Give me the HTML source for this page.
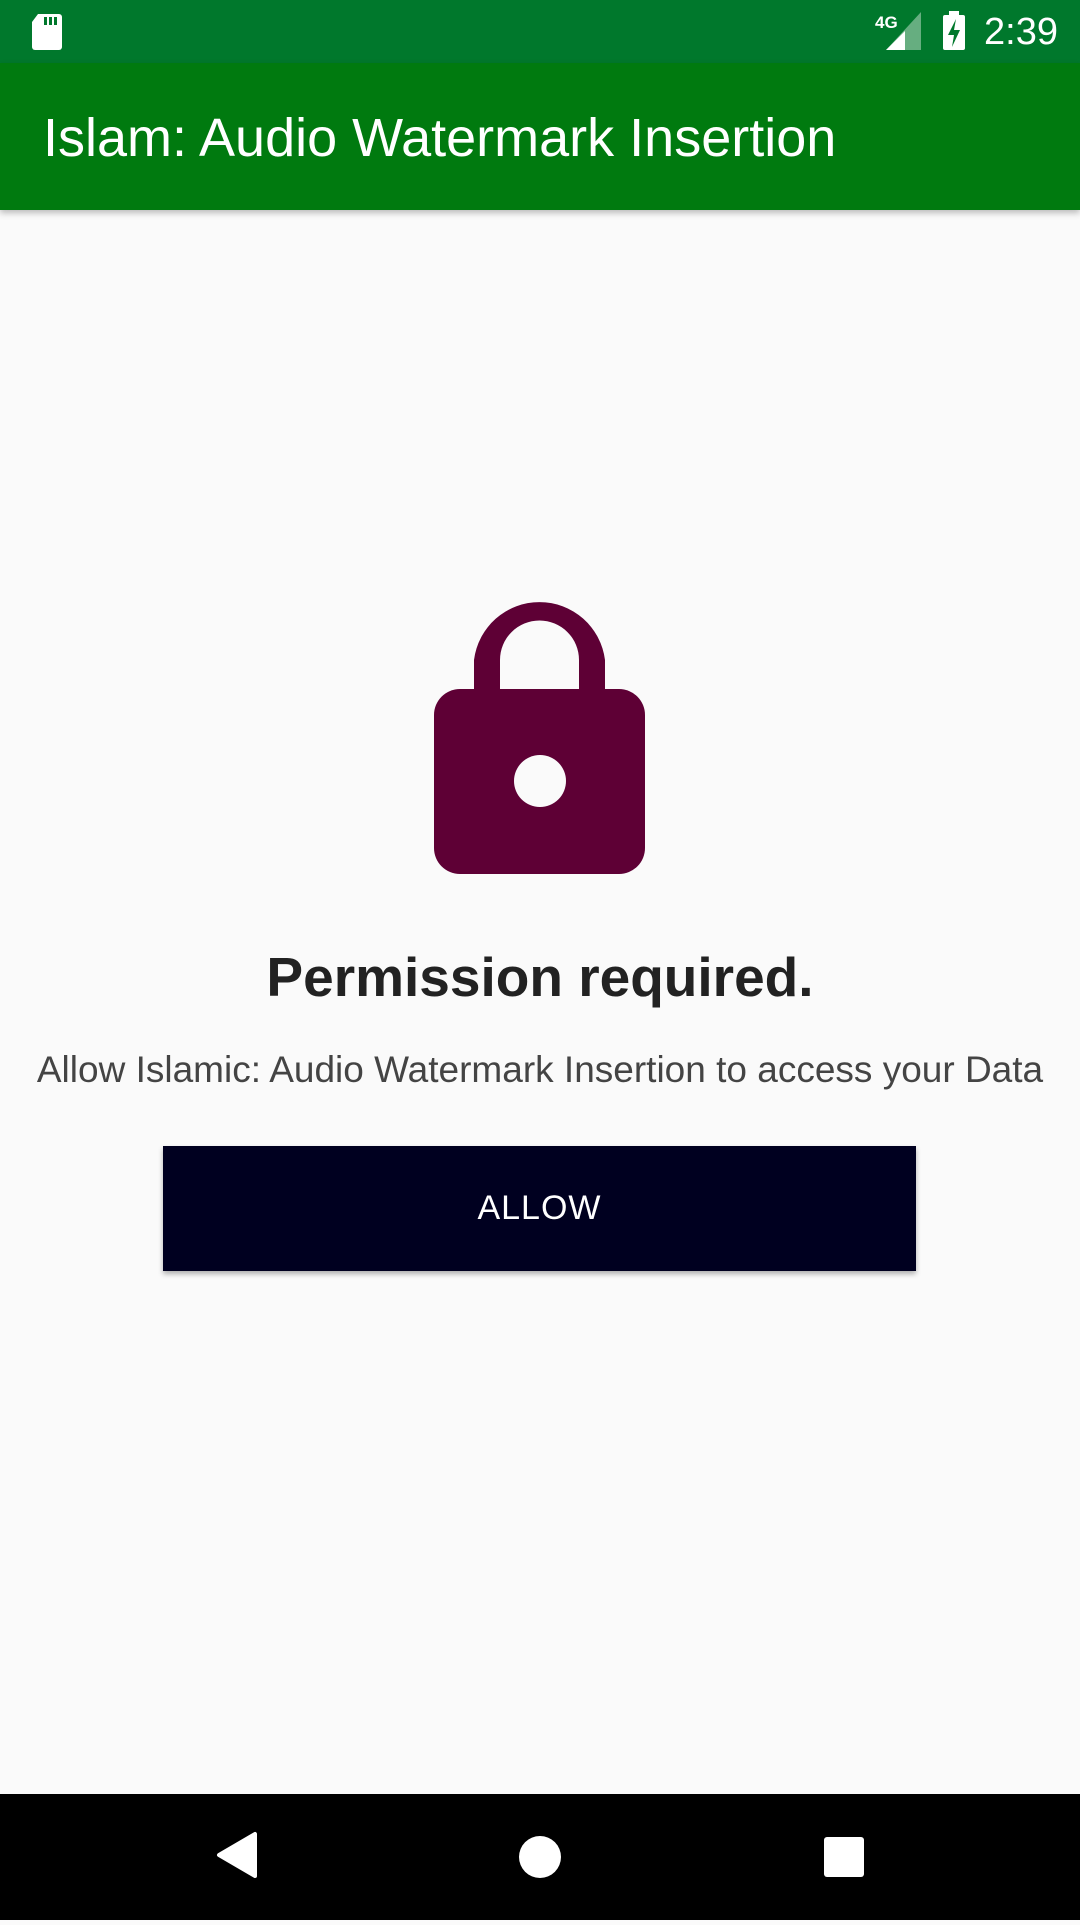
<!DOCTYPE html>
<html><head><meta charset="utf-8"><style>
*{margin:0;padding:0;box-sizing:border-box}
body{width:1080px;height:1920px;background:#fafafa;position:relative;overflow:hidden;font-family:"Liberation Sans",sans-serif}
.sb{position:absolute;left:0;top:0;width:1080px;height:63px;background:#00782c}
.ab{position:absolute;left:0;top:63px;width:1080px;height:147px;background:#007a0f;box-shadow:0 3px 6px rgba(0,0,0,.25)}
.title{position:absolute;left:43px;top:107px;color:#fff;font-size:54px;line-height:62px;white-space:nowrap}
.h{position:absolute;left:0;width:1080px;text-align:center;top:942px;font-size:55px;font-weight:bold;color:#222;line-height:70px}
.s{position:absolute;left:0;width:1080px;text-align:center;top:1047px;font-size:37px;color:#444;line-height:46px;white-space:nowrap}
.btn{position:absolute;left:163px;top:1146px;width:753px;height:125px;background:#000020;box-shadow:0 3px 5px rgba(0,0,0,.3);color:#fff;font-size:34px;text-align:center;line-height:125px;letter-spacing:1px}
.nav{position:absolute;left:0;top:1794px;width:1080px;height:126px;background:#000}
.time{position:absolute;right:22px;top:9px;color:#fff;font-size:38px;line-height:46px}
</style></head><body>
<div class="sb">
<svg width="1080" height="63" style="position:absolute;left:0;top:0">
<path d="M38 14h21a3 3 0 0 1 3 3v30a3 3 0 0 1-3 3H35a3 3 0 0 1-3-3V22z" fill="#fff"/>
<rect x="44" y="17" width="3" height="8" fill="#00782c"/><rect x="49" y="17" width="3" height="8" fill="#00782c"/><rect x="54" y="17" width="3" height="8" fill="#00782c"/>
<path d="M921 12v38h-35z" fill="#fff" opacity=".4"/>
<path d="M905 31v19h-19z" fill="#fff"/>
<text x="875" y="28" fill="#fff" font-size="17" font-weight="bold" font-family="Liberation Sans">4G</text>
<rect x="943" y="15" width="22" height="35" rx="2" fill="#fff"/><rect x="949" y="11" width="10" height="5" fill="#fff"/>
<path d="M956 19l-8 16h6l-2 12 8-17h-6z" fill="#00782c"/>
</svg>
<div class="time">2:39</div>
</div>
<div class="ab"></div>
<div class="title">Islam: Audio Watermark Insertion</div>
<svg width="1080" height="300" style="position:absolute;left:0;top:590px">
<path d="M474 100V74a66 66 0 0 1 131 0v26h-26V74a39.5 39.5 0 0 0-79 0v26z" fill="#5e0035" transform="translate(0,-4)"/>
<rect x="474" y="80" width="26" height="20" fill="#5e0035"/><rect x="579" y="80" width="26" height="20" fill="#5e0035"/>
<rect x="434" y="99" width="211" height="185" rx="26" fill="#5e0035"/>
<circle cx="540" cy="191" r="26" fill="#fafafa"/>
</svg>
<div class="h">Permission required.</div>
<div class="s">Allow Islamic: Audio Watermark Insertion to access your Data</div>
<div class="btn">ALLOW</div>
<div class="nav">
<svg width="1080" height="126">
<path d="M255 40v42l-36-21z" fill="#fff" stroke="#fff" stroke-width="4" stroke-linejoin="round"/>
<circle cx="540" cy="63" r="21" fill="#fff"/>
<rect x="824" y="43" width="40" height="40" rx="3" fill="#fff"/>
</svg>
</div>
</body></html>
